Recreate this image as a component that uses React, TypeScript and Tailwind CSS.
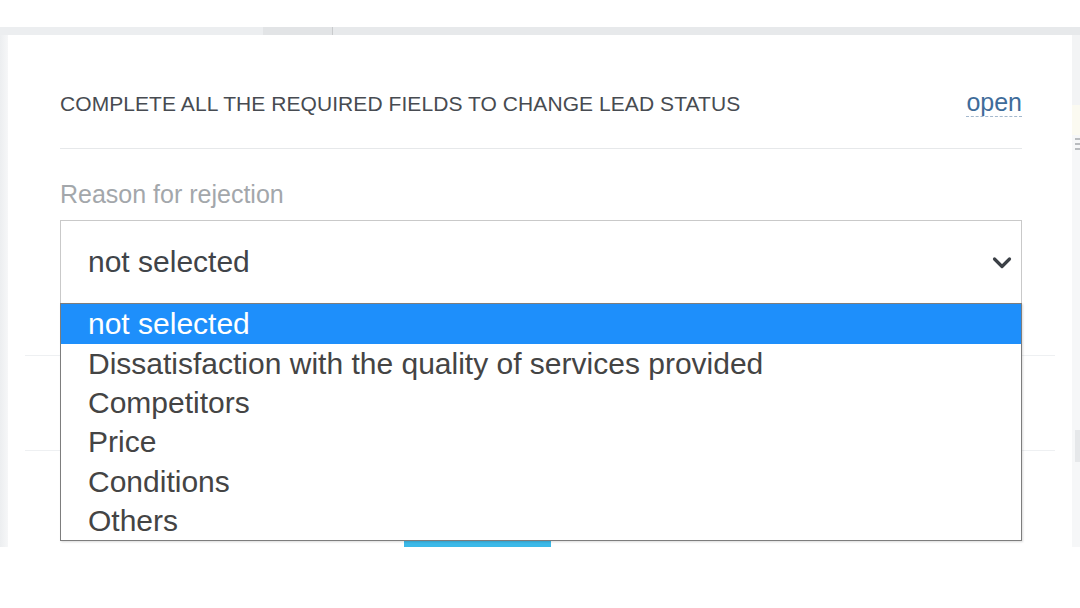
import React from "react"

const options = [
  "not selected",
  "Dissatisfaction with the quality of services provided",
  "Competitors",
  "Price",
  "Conditions",
  "Others",
]

function Chevron() {
  return (
    <svg width="20" height="13" viewBox="0 0 20 13" fill="none">
      <polyline
        points="2.5,3 10,10.5 17.5,3"
        stroke="#3b4046"
        strokeWidth="3.2"
        strokeLinecap="round"
        strokeLinejoin="round"
      />
    </svg>
  )
}

function ReasonSelect() {
  return (
    <div className="relative mt-[11px] z-10">
      <div className="h-[83px] border border-b-0 border-[#c9c9c9] bg-white flex items-center justify-between pl-[27px] pr-[9px]">
        <span className="text-[30px] leading-[82px] text-[#404449]">not selected</span>
        <Chevron />
      </div>
      <ul className="absolute left-0 right-0 top-[83px] border border-[#7d7d7d] bg-white shadow-[1px_1px_2px_rgba(0,0,0,0.15)]">
        {options.map((opt, i) => (
          <li
            key={opt}
            className={
              i === 0
                ? "h-[40px] pl-[27px] text-[30px] leading-[40px] bg-[#1e8ffb] text-white"
                : "h-[39.2px] pl-[27px] text-[30px] leading-[39.2px] text-[#444444]"
            }
          >
            {opt}
          </li>
        ))}
      </ul>
    </div>
  )
}

export default function App() {
  return (
    <div className="w-[1080px] h-[608px] bg-white pt-[27px] font-['Liberation_Sans',Arial,sans-serif]">
      <div className="h-[520px] flex flex-col bg-[#eef0f2]">
        {/* strip of the page behind the modal */}
        <div className="h-[8px] flex shrink-0">
          <div className="w-[263px] bg-[#eceef0]" />
          <div className="w-[69px] bg-[#e2e4e6]" />
          <div className="w-px bg-[#c9cbcd]" />
          <div className="flex-1 bg-[#e7e9eb]" />
        </div>

        <div className="flex flex-1 min-h-0">
          <div className="w-[8px] bg-gradient-to-r from-[#eceef0] to-[#f6f7f8]" />

          <div className="w-[1064px] bg-white overflow-hidden pl-[52px] pr-[50px] pt-[54px]">
            <div className="flex items-baseline justify-between">
              <h2 className="text-[21px] leading-[24px] text-[#474b51] tracking-[0.07px]">
                COMPLETE ALL THE REQUIRED FIELDS TO CHANGE LEAD STATUS
              </h2>
              <span className="inline-block text-[25px] leading-[27px] text-[#3f6c9a] border-b border-dashed border-[#a3b8cd]">
                open
              </span>
            </div>

            <div className="mt-[31px] h-px bg-[#e6e8ea]" />

            <div className="mt-[31px] text-[25px] leading-[29px] text-[#a3a7ab]">
              Reason for rejection
            </div>

            <ReasonSelect />

            {/* form rows hidden under the open list */}
            <div className="-ml-[35px] -mr-[33px]">
              <div className="mt-[52px] h-px bg-[#eef0f2]" />
              <div className="mt-[94px] h-px bg-[#eef0f2]" />
            </div>
            <div className="mt-[90px] ml-[344px] w-[147px] h-[36px] bg-[#3cb9e8]" />
          </div>

          <div className="w-[8px] flex flex-col bg-[#f6f7f8]">
            <div className="h-[70px] bg-[#f3f4f5]" />
            <div className="h-[30px] bg-[#fbfaf1]" />
            <div className="mt-[3px] ml-[3px] flex flex-col gap-[3px]">
              <div className="h-[2px] bg-[#b9bcbf]" />
              <div className="h-[2px] bg-[#b9bcbf]" />
              <div className="h-[2px] bg-[#b9bcbf]" />
            </div>
            <div className="mt-[280px] ml-[3px] h-[32px] bg-[#e6e8ea]" />
          </div>
        </div>
      </div>
    </div>
  )
}
